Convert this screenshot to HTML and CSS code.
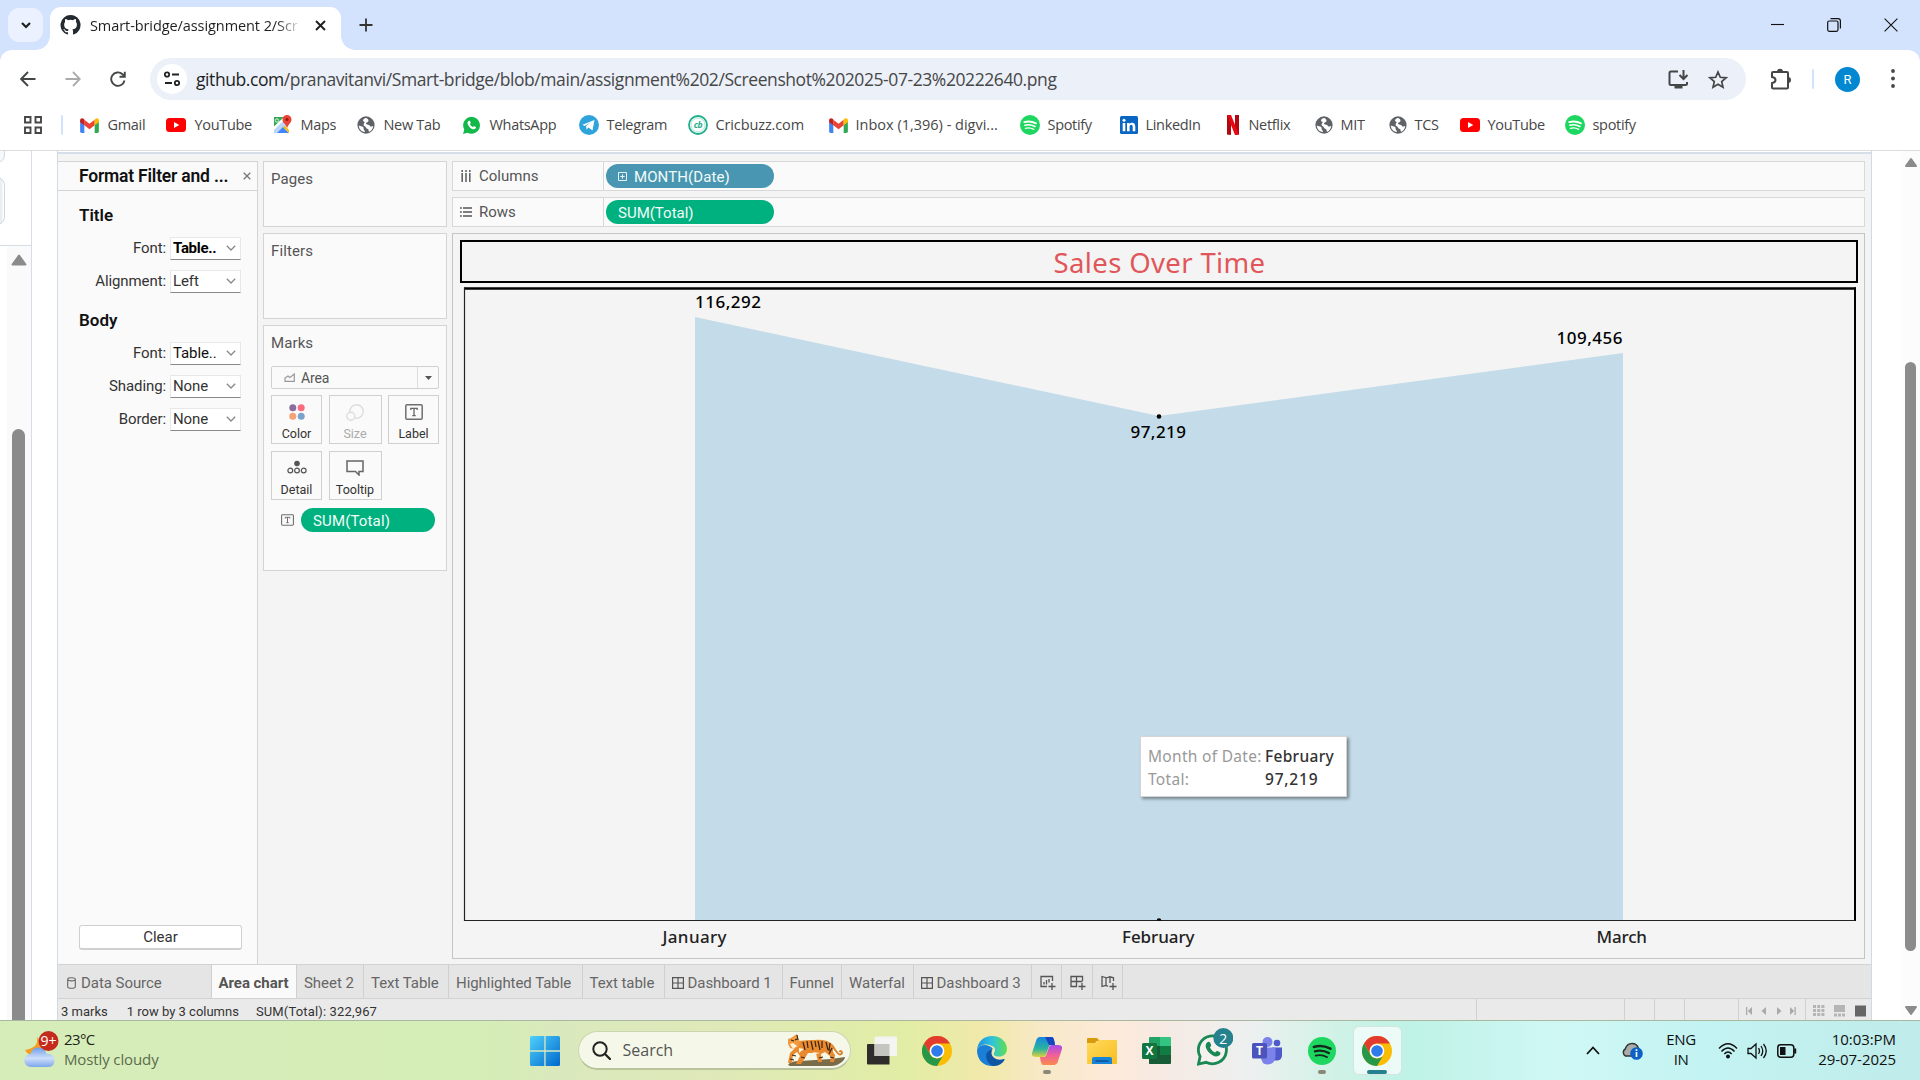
FILE: index.html
```html
<!DOCTYPE html>
<html lang="en">
<head>
<meta charset="utf-8">
<title>Smart-bridge/assignment 2/Screenshot 2025-07-23 222640.png</title>
<link rel="stylesheet" href="styles.css">
</head>
<body>
<svg class="defs" width="0" height="0">
  <defs>
    <symbol id="i-gmail" viewBox="0 0 20 16"><path fill="#4285f4" d="M0 3v11.500Q0 16 1.500 16H4.500V6z"/><path fill="#34a853" d="M20 3v11.500Q20 16 18.500 16H15.500V6z"/><path fill="#ea4335" d="M4.500 1.800 10 6l5.500-4.200v6L10 12 4.500 7.800z"/><path fill="#c5221f" d="M0 2.500C0 .3 2.300-.4 4.500 1.500V7.800L0 4.500z"/><path fill="#fbbc04" d="M20 2.500C20 .3 17.700-.4 15.500 1.500V7.800L20 4.500z"/></symbol>
    <symbol id="i-yt" viewBox="0 0 20 14"><rect width="20" height="14" rx="3.500" fill="#f00"/><path fill="#fff" d="M8 4l5.300 3L8 10z"/></symbol>
    <symbol id="i-globe" viewBox="0 0 20 20"><circle cx="10" cy="10" r="9.600" fill="#5f6368"/><path fill="#fff" d="M9.500 2.200c2 .2 3.500 1.600 3.300 3.400-.2 1.500-2.800 1.300-2.800 2.700 0 1.800 4.500.8 5.200 3.600L18 11c-.2 3-2 5.500-4.500 6.600-.8-.5-.6-1.500-.8-2.500-.3-1.300-2.600-.6-2.800-2.300-.2-1.600-2.400-1.200-2.600-3-.1-1.500 1.400-1.800 1.200-2.800-.2-1.200-1.700-.6-1.800-1.800 0-1.500 1.400-2.600 2.800-3z"/><path fill="#fff" d="M2 10.500c1.500.8 3.500.6 4.800 1.800 1.200 1.200-.2 2.300 1.400 3.600.6.500.6 1.400.3 2-3.700-.6-6.400-3.700-6.500-7.400z"/></symbol>
    <symbol id="i-spotify" viewBox="0 0 20 20"><circle cx="10" cy="10" r="10" fill="#1ed760"/><g fill="none" stroke-linecap="round" stroke="currentColor"><path stroke-width="1.900" d="M4.200 7.100q6-1.800 11.800 1.200"/><path stroke-width="1.600" d="M4.900 10.300q5.100-1.500 10 1.200"/><path stroke-width="1.300" d="M5.400 13.300q4.400-1.200 8.300 1.100"/></g></symbol>
    <symbol id="i-chrome" viewBox="0 0 30 30"><circle cx="15" cy="15" r="15" fill="#fbbc05"/><path fill="#e33b2e" d="M2 7.500A15 15 0 0 1 28 7.500H15a7.500 7.500 0 0 0-6.500 11.200z"/><path fill="#279847" d="M2 7.500 8.500 18.750A7.500 7.500 0 0 0 21.500 18.750L15 30A15 15 0 0 1 2 7.500z"/><circle cx="15" cy="15" r="7.300" fill="#fff"/><circle cx="15" cy="15" r="5.800" fill="#2f7bea"/></symbol>
    <symbol id="i-dash" viewBox="0 0 12 12"><path fill="none" stroke="#555" stroke-width="1.200" d="M.6.600h10.800v10.800H.6zM6 .6v10.800M.6 6h10.800"/></symbol>
    <symbol id="i-t" viewBox="0 0 18 16"><rect x=".8" y=".8" width="16.400" height="14.400" rx="1.200" fill="none" stroke="#6f6f6f" stroke-width="1.500"/><path fill="none" stroke="#666" stroke-width="1.300" d="M5.800 6V4.300h6.400V6M9 4.300v7.400M7.300 11.700h3.400"/></symbol>
    <symbol id="i-chev" viewBox="0 0 10 6"><path fill="none" stroke="#888" stroke-width="1.300" d="M.8.800 5 5 9.200.8"/></symbol>
  </defs>
</svg>

<header class="tabstrip">
  <div class="tab-search"><svg width="10" height="8" viewBox="0 0 10 8"><path d="M1 2l4 4 4-4" fill="none" stroke="#1f1f1f" stroke-width="2.200"/></svg></div>
  <div class="tab">
    <svg class="gh" width="21" height="20" viewBox="0 0 16 16"><path fill="#24292f" d="M8 0a8 8 0 0 0-2.530 15.590c.4.070.55-.17.550-.38v-1.490c-2.010.37-2.530-.49-2.690-.94-.09-.23-.48-.94-.82-1.130-.28-.15-.68-.52-.01-.53.63-.01 1.080.58 1.230.82.72 1.210 1.870.87 2.330.66.07-.52.280-.87.510-1.070-1.780-.2-3.640-.89-3.640-3.950 0-.87.310-1.590.820-2.150-.08-.2-.36-1.020.08-2.120 0 0 .67-.21 2.200.82a7.600 7.600 0 0 1 4 0c1.530-1.040 2.200-.82 2.200-.82.44 1.100.16 1.920.08 2.120.51.560.82 1.270.82 2.150 0 3.070-1.870 3.750-3.650 3.950.29.250.54.730.54 1.480v2.200c0 .21.150.46.550.38A8 8 0 0 0 8 0z"/></svg>
    <span class="tab-title">Smart-bridge/assignment 2/Scr</span>
    <svg width="11" height="11" viewBox="0 0 11 11"><path d="M1 1l9 9M10 1l-9 9" stroke="#1f1f1f" stroke-width="1.900"/></svg>
  </div>
  <svg class="newtab" width="14" height="14" viewBox="0 0 14 14"><path d="M7 .5v13M.5 7h13" stroke="#333" stroke-width="1.800"/></svg>
  <div class="winctl">
    <svg width="13" height="13" viewBox="0 0 13 13"><path d="M0 5.500h13" stroke="#111" stroke-width="1.100"/></svg>
    <svg width="14" height="14" viewBox="0 0 14 14"><path d="M3.500.6H11q2.400 0 2.400 2.400v7.500" fill="none" stroke="#111" stroke-width="1.200"/><rect x=".7" y="3" width="10.300" height="10.300" rx="1.500" fill="none" stroke="#111" stroke-width="1.200"/></svg>
    <svg width="14" height="14" viewBox="0 0 14 14"><path d="M.6.600l12.800 12.800M13.400.600L.6 13.400" stroke="#111" stroke-width="1.100"/></svg>
  </div>
</header>

<div class="chrome-body">
<nav class="toolbar">
  <div class="nav">
    <svg width="16" height="16" viewBox="0 0 16 16"><path d="M15.500 8H1.500M8 1 1.200 8 8 15" fill="none" stroke="#444746" stroke-width="1.900"/></svg>
    <svg width="16" height="16" viewBox="0 0 16 16"><path d="M.5 8h14M8 1l6.800 7L8 15" fill="none" stroke="#aaa" stroke-width="1.800"/></svg>
    <svg width="16" height="16" viewBox="0 0 16 16"><path d="M14.500 9.500a6.700 6.700 0 1 1-2-6.300L14.500 5M14.800.8v5H9.500" fill="none" stroke="#444746" stroke-width="1.900"/></svg>
  </div>
  <div class="omnibox">
    <div class="site"><svg width="16" height="16" viewBox="0 0 16 16"><g fill="none" stroke="#222" stroke-width="1.800"><circle cx="3" cy="3.500" r="2.200"/><path d="M8 3.500h7M1 12h7"/><circle cx="13" cy="12" r="2.200"/></g></svg></div>
    <span class="url"><b>github.com</b>/pranavitanvi/Smart-bridge/blob/main/assignment%202/Screenshot%202025-07-23%20222640.png</span>
    <svg class="inst" width="21" height="19" viewBox="0 0 21 19"><path d="M10 1.500H3Q1.500 1.500 1.500 3v10.500Q1.500 15 3 15h14.500q1.500 0 1.500-1.500V12" fill="none" stroke="#444746" stroke-width="2"/><path d="M6.500 15h8v3.500h-8z" fill="#444746"/><path d="M15.500 0v8M11.500 5l4 4 4-4" fill="none" stroke="#444746" stroke-width="2"/></svg>
    <svg width="20" height="19" viewBox="0 0 20 19"><path d="M10 2l2.300 5.300 5.700.5-4.300 3.800L15 17.200 10 14.200 5 17.200l1.300-5.600L2 7.800l5.700-.5z" fill="none" stroke="#444746" stroke-width="1.700"/></svg>
  </div>
  <svg class="ext" width="21" height="22" viewBox="0 0 21 22"><path d="M2 4h14q1 0 1 1v14.500q0 1-1 1H2q-1 0-1-1V15q3.500-.5 3.500-3T1 9V5q0-1 1-1z" fill="none" stroke="#444746" stroke-width="2"/><path d="M6 4a3 3.300 0 0 1 6 0zM17 9a3 3 0 0 1 0 6z" fill="#444746"/></svg>
  <i class="vsep"></i>
  <div class="avatar">R</div>
  <svg class="dots" width="4" height="20" viewBox="0 0 4 20"><g fill="#444746"><circle cx="2" cy="2" r="1.900"/><circle cx="2" cy="9.500" r="1.900"/><circle cx="2" cy="17" r="1.900"/></g></svg>
</nav>

<nav class="bookmarks">
  <svg width="18" height="18" viewBox="0 0 18 18"><path d="M1 1h5.500v5.500H1zM11.500 1H17v5.500h-5.500zM1 11.500h5.500V17H1zM11.500 11.500H17V17h-5.500z" fill="none" stroke="#444746" stroke-width="1.900"/></svg>
  <i class="vsep"></i>
  <a><svg width="19" height="15"><use href="#i-gmail"/></svg>Gmail</a>
  <a><svg width="20" height="14"><use href="#i-yt"/></svg>YouTube</a>
  <a><svg width="20" height="20" viewBox="0 0 20 20"><path fill="#34a853" d="M2 2h12L2 13z"/><path fill="#b9d7fb" d="M2 12 14 2h3v8L8 18H2z"/><path fill="#fff" d="M2 11.500 12 2h3L2 15z"/><path fill="#4285f4" d="M5 18l6-6 6 6z"/><path fill="#fbbc04" d="M13 11l4 4v3L11 12z"/><path fill="#ea4335" d="M15 0a4.500 4.500 0 0 1 4.500 4.500C19.500 8 16 9 15.200 13 14 9 10.500 8 10.500 4.500A4.500 4.500 0 0 1 15 0z"/><circle cx="15" cy="4.500" r="1.500" fill="#96190f"/><circle cx="5" cy="5.500" r="1.700" fill="none" stroke="#d9f2df"/></svg>Maps</a>
  <a><svg width="18" height="18"><use href="#i-globe"/></svg>New Tab</a>
  <a><svg width="17" height="17" viewBox="0 0 17 17"><path fill="#12b94a" d="M0 17l1.300-4.400A8.400 8.400 0 1 1 4.500 15.700z"/><path fill="#fff" d="M5.500 4c-2 1.700-.4 4.300 1 5.900 1.800 2 4.300 3.300 6 1.700.8-.8.500-1.500-.2-1.900-1.700-.8-1.500-.5-2.300.4C8.600 9.500 7.400 8.400 6.900 7c.9-.8 1-1 .5-2.100C7 3.900 6.600 3.400 5.500 4z"/></svg>WhatsApp</a>
  <a><svg width="20" height="20" viewBox="0 0 20 20"><circle cx="10" cy="10" r="10" fill="#2fa3dc"/><path fill="#fff" d="M3.500 9.800 15.500 5l-2 10.500-4-3-2 2-.4-3.500 5-4-6.500 4z"/></svg>Telegram</a>
  <a class="cric"><svg class="cb" width="20" height="20" viewBox="0 0 20 20"><circle cx="10" cy="10" r="9" fill="#fff" stroke="#1fae8c" stroke-width="1.800"/><circle cx="10" cy="10" r="7" fill="none" stroke="#9cdccb" stroke-width=".8"/><text x="10" y="13.300" text-anchor="middle">cb</text></svg>Cricbuzz.com</a>
  <a class="inbox"><svg width="19" height="15"><use href="#i-gmail"/></svg>Inbox (1,396) - digvi...</a>
  <a><svg width="20" height="20"><use href="#i-spotify"/></svg>Spotify</a>
  <a><svg class="li" width="18" height="18" viewBox="0 0 18 18"><rect width="18" height="18" rx="1.500" fill="#0a66c2"/><path fill="#fff" d="M2.700 7h2.600v8.300H2.700zM7 7h2.500v1.200c1.300-2.200 5.800-2 5.800 2.300v4.800h-2.600v-4.200c0-3.300-3.100-2.700-3.100 0v4.200H7z"/><circle cx="4" cy="4.200" r="1.500" fill="#fff"/></svg>LinkedIn</a>
  <a><svg width="12" height="20" viewBox="0 0 12 20"><path fill="#b20710" d="M0 0h4v20l-4-.5zM8 0h4v19.500L8 20z"/><path fill="#e50914" d="M0 0h4l8 19.500L8 20z"/></svg>Netflix</a>
  <a><svg width="18" height="18"><use href="#i-globe"/></svg>MIT</a>
  <a><svg width="18" height="18"><use href="#i-globe"/></svg>TCS</a>
  <a><svg width="20" height="14"><use href="#i-yt"/></svg>YouTube</a>
  <a><svg width="20" height="20"><use href="#i-spotify"/></svg>spotify</a>
</nav>
</div>

<main class="page">
  <aside class="gh-side">
    <div class="gh-top"><i class="stub s1"></i><i class="stub s2"></i></div>
    <div class="gh-scroll"><svg width="16" height="12" viewBox="0 0 16 12"><path d="M8 1.500 14.500 10.500H1.500z" fill="#8b8b8b" stroke="#8b8b8b" stroke-width="2" stroke-linejoin="round"/></svg><i class="thumb"></i></div>
  </aside>

  <section class="shot">
    <div class="work">
      <aside class="format">
        <div class="fhead"><h2>Format Filter and ...</h2><svg width="8" height="8" viewBox="0 0 8 8"><path d="M.7.700l6.600 6.600M7.300.700L.7 7.300" stroke="#777" stroke-width="1.300"/></svg></div>
        <h3>Title</h3>
        <label><span>Font:</span><span class="sel strong">Table..<svg width="10" height="6"><use href="#i-chev"/></svg></span></label>
        <label><span>Alignment:</span><span class="sel">Left<svg width="10" height="6"><use href="#i-chev"/></svg></span></label>
        <h3 class="second">Body</h3>
        <label><span>Font:</span><span class="sel dark">Table..<svg width="10" height="6"><use href="#i-chev"/></svg></span></label>
        <label><span>Shading:</span><span class="sel">None<svg width="10" height="6"><use href="#i-chev"/></svg></span></label>
        <label><span>Border:</span><span class="sel">None<svg width="10" height="6"><use href="#i-chev"/></svg></span></label>
        <button class="clear">Clear</button>
      </aside>

      <div class="cards">
        <div class="card pages">Pages</div>
        <div class="card filters">Filters</div>
        <div class="card marks">
          <span>Marks</span>
          <div class="mtype"><svg width="11" height="9" viewBox="0 0 11 9"><path d="M1 8.300V5l3-2 2 1.500L10.300 1v7.300z" fill="none" stroke="#999" stroke-width="1.200"/></svg><span>Area</span><i><svg width="7" height="4" viewBox="0 0 7 4"><path d="M0 0h7L3.500 4z" fill="#555"/></svg></i></div>
          <div class="mgrid">
            <div><svg width="16" height="16" viewBox="0 0 16 16"><circle cx="3.800" cy="3.800" r="3.500" fill="#8a6f9e"/><circle cx="12.200" cy="3.800" r="3.500" fill="#fa6b7f"/><circle cx="3.800" cy="12.200" r="3.500" fill="#f4a273"/><circle cx="12.200" cy="12.200" r="3.500" fill="#7ba3cc"/></svg>Color</div>
            <div class="off"><svg width="18" height="17" viewBox="0 0 18 17"><g fill="#fafafa" stroke="#ddd" stroke-width="1.400"><circle cx="10.500" cy="7.500" r="6.800"/><circle cx="4.800" cy="12.200" r="4"/></g></svg>Size</div>
            <div><svg width="18" height="16"><use href="#i-t"/></svg>Label</div>
            <div><svg width="20" height="14" viewBox="0 0 20 14"><circle cx="10" cy="3.500" r="2.800" fill="#555"/><g fill="none" stroke="#555" stroke-width="1.200"><circle cx="3.300" cy="10.500" r="2.400"/><circle cx="10" cy="10.500" r="2.400"/><circle cx="16.700" cy="10.500" r="2.400"/></g></svg>Detail</div>
            <div><svg width="18" height="16" viewBox="0 0 18 16"><path d="M1 1h16v10.500h-4v3.500l-3.500-3.500H1z" fill="none" stroke="#666" stroke-width="1.500"/></svg>Tooltip</div>
          </div>
          <div class="mpill"><svg width="13" height="12"><use href="#i-t"/></svg><span class="pill green">SUM(Total)</span></div>
        </div>
      </div>

      <div class="viz">
        <div class="shelf"><span class="sname"><svg width="10" height="12" viewBox="0 0 10 12"><path d="M1.200 3v9M5 3v9M8.800 3v9M1.200 0v2M5 0v2M8.800 0v2" stroke="#666" stroke-width="1.600"/></svg>Columns</span><span class="pill blue"><svg width="9" height="9" viewBox="0 0 9 9"><path d="M.5.500h8v8h-8zM4.500 2.300v4.400M2.300 4.500h4.400" fill="none" stroke="#e6f1f6"/></svg>MONTH(Date)</span></div>
        <div class="shelf"><span class="sname rows"><svg width="12" height="10" viewBox="0 0 12 10"><path d="M3 1h9M3 5h9M3 9h9M0 1h1.800M0 5h1.800M0 9h1.800" stroke="#555" stroke-width="1.600"/></svg>Rows</span><span class="pill green">SUM(Total)</span></div>
        <div class="canvas">
          <h1>Sales Over Time</h1>
          <div class="plot">
            <svg class="chart" width="1393" height="670" viewBox="464 287 1393 670">
              <path d="M695 317 1159 416 1623 353V920.500H695z" fill="#c4dce9"/>
              <path d="M464 288.500H1856" stroke="#000" stroke-width="2.400"/>
              <path d="M1855 287.500V921" stroke="#000" stroke-width="2"/>
              <path d="M464.500 287.500V920.500H1855" fill="none" stroke="#222" stroke-width="1.200"/>
              <circle cx="1159" cy="416.500" r="2.300"/><path d="M1156.700 920.500a2.300 2.300 0 0 1 4.600 0z"/>
              <g class="val"><text x="695" y="308" textLength="66">116,292</text><text x="1130.500" y="438" textLength="55.500">97,219</text><text x="1556.500" y="344" textLength="66">109,456</text></g>
              <g class="mon"><text x="662.500" y="943" textLength="64">January</text><text x="1122" y="943" textLength="72.500">February</text><text x="1596.500" y="943" textLength="50.500">March</text></g>
            </svg>
            <dl class="tip"><dt>Month of Date:</dt><dd>February</dd><dt>Total:</dt><dd class="num">97,219</dd></dl>
          </div>
        </div>
      </div>
    </div>

    <div class="sheets">
      <span class="ds"><svg width="9" height="12" viewBox="0 0 9 12"><path d="M.7 2.300q0-1.600 3.800-1.600t3.800 1.600v7.400q0 1.600-3.800 1.600T.7 9.700zq0 1.600 3.800 1.600t3.800-1.600" fill="none" stroke="#666" stroke-width="1.100"/></svg>Data Source</span>
      <span class="active">Area chart</span><span>Sheet 2</span><span>Text Table</span><span>Highlighted Table</span><span>Text table</span>
      <span><svg width="12" height="12"><use href="#i-dash"/></svg>Dashboard 1</span><span>Funnel</span><span>Waterfal</span>
      <span><svg width="12" height="12"><use href="#i-dash"/></svg>Dashboard 3</span>
      <span class="add"><svg width="16" height="16" viewBox="0 0 16 16"><path d="M7 11.500H1V1.500h11.500V6M4 9.500V7M6.500 9.500V5M9 7.500V4M12 8v7M8.500 11.500h7" fill="none" stroke="#555" stroke-width="1.300"/></svg></span>
      <span class="add"><svg width="16" height="16" viewBox="0 0 16 16"><path d="M7 11.500H1V1.500h11.500V6M6.500 1.500v10M1 6.500h11.500M12 8v7M8.500 11.500h7" fill="none" stroke="#555" stroke-width="1.300"/></svg></span>
      <span class="add"><svg width="16" height="16" viewBox="0 0 16 16"><path d="M7 11.500 5 10.300 1 11.500V1.500l4 1.200V10M5 3l4-1.200 3.500 1V6M9 2v6M12 8v7M8.500 11.500h7" fill="none" stroke="#555" stroke-width="1.300"/></svg></span>
    </div>
    <div class="status">
      <span>3 marks</span><span>1 row by 3 columns</span><span>SUM(Total): 322,967</span>
      <div class="cells"><i></i><i></i><i></i><i></i>
        <i class="pager"><svg width="52" height="8" viewBox="0 0 52 8"><g fill="#aaa"><path d="M1 0h1.300v8H1zM7 0v8L2.800 4zM21 0v8l-4.500-4zM32 0v8l4.500-4zM45 0v8l4.200-4zM49.500 0h1.300v8h-1.300z"/></g></svg></i>
        <i class="views"><svg width="54" height="12" viewBox="0 0 54 12"><path d="M0 1.500h11.500M0 5.500h11.500M0 9.500h11.500" stroke="#b5b5b5" stroke-width="3" stroke-dasharray="3 1.200"/><path d="M21 0h11v7H21z" fill="#b5b5b5"/><path d="M21 10h11" stroke="#b5b5b5" stroke-width="3" stroke-dasharray="3 1"/><path d="M42 .500h11v11H42z" fill="#666"/></svg></i>
      </div>
    </div>
  </section>

  <div class="vscroll"><svg width="14" height="11" viewBox="0 0 14 11"><path d="M7 2l5 7H2z" fill="#8b8b8b" stroke="#8b8b8b" stroke-width="2" stroke-linejoin="round"/></svg><i class="thumb"></i><svg width="14" height="11" viewBox="0 0 14 11"><path d="M7 9l5-7H2z" fill="#8b8b8b" stroke="#8b8b8b" stroke-width="2" stroke-linejoin="round"/></svg></div>
</main>

<footer class="taskbar">
  <div class="weather">
    <svg width="36" height="40" viewBox="0 0 36 40"><defs><linearGradient id="cl" x2="0" y2="1"><stop offset="0" stop-color="#6f9ce8"/><stop offset=".55" stop-color="#cfe0fb"/><stop offset="1" stop-color="#7ea6ea"/></linearGradient></defs><path d="M13 9c1 8-2 11-12 13 4 8 18 8 22-2z" fill="#f59e22"/><path d="M7 39a6.500 6.500 0 0 1-.5-13Q8 19 15 19.500q6 .5 7.500 6.200Q31 26 30.500 33q-.5 6-6.500 6z" fill="url(#cl)"/><circle cx="24.500" cy="13" r="10" fill="#c42b1c"/><text x="24.500" y="18" text-anchor="middle" class="wb">9+</text></svg>
    <p><b>23°C</b><span>Mostly cloudy</span></p>
  </div>

  <div class="apps">
    <svg class="win" width="30" height="30" viewBox="0 0 30 30"><defs><linearGradient id="wg" x2="1" y2="1"><stop offset="0" stop-color="#4fd0fb"/><stop offset="1" stop-color="#0069cc"/></linearGradient></defs><path fill="url(#wg)" d="M0 1.500Q0 0 1.500 0H14.300V14.300H0zM15.600 0h12.900Q30 0 30 1.500V14.300H15.600zM0 15.700h14.300V30H1.500Q0 30 0 28.500zM15.600 15.700H30v12.800Q30 30 28.500 30H15.600z"/></svg>
    <div class="search">
      <svg width="19" height="19" viewBox="0 0 19 19"><circle cx="8" cy="8" r="6.700" fill="none" stroke="#222" stroke-width="2"/><path d="M13 13l5 5" stroke="#222" stroke-width="2.300" stroke-linecap="round"/></svg>
      <span>Search</span>
      <svg width="60" height="34" viewBox="0 0 60 34"><path d="M2 32q2-4 12-4l31-2 14-2q0 4-8 8-3 1-6 1H4z" fill="#7a6b49"/><path d="M46 12q6 10 8 9.500 3-1 1.500-3-1.500-1-2 .5" fill="none" stroke="#d9822b" stroke-width="2"/><path d="M13 8q7-1 15-1 14-1 19 5l0 7 2 3-1 7h-4l1-5-6-5-4 2 1 8h-4l-2-9-8 0-3 5-4 6h-5l4-8-3-4-4 3-1 8H2l2-10 5-5z" fill="#ea8a2e"/><path d="M2 6 5 5l6-4 1 4 2 4-2 5-4 2-4-1-2-4z" fill="#f29a3e"/><path d="M4 11l3-1 4 3-4 3zM13 15l5 1-5 4zM26 19l8 1-4 1z" fill="#fff3dc"/><path d="M17 9l2 8M21 8l1 7M25 8l2 9M29 8l1 6M32 8l2 9M36 8v7M40 9l2 8M44 10l-1 8M46 15l-3 6M6 22l4 1M4 26l4 1M33 25l4-1M44 24l4 1M11 2l1 5M5 7l3 1M9 7l2-1M15 24l4 1" stroke="#3a2413" stroke-width="1.200" fill="none"/></svg>
    </div>
    <svg class="tv" width="30" height="30" viewBox="0 0 30 30"><path d="M0 9q0-1 1-1h21.500v20.500H1q-1 0-1-1z" fill="#2e2d2b"/><path d="M7.500 1.500q0-1 1-1H29q1 0 1 1v17.500q0 1-1 1H7.500z" fill="#f4f4f2"/><path d="M7.500 8h15v12h-15z" fill="#c4c5bf"/></svg>
    <svg width="30" height="30"><use href="#i-chrome"/></svg>
    <svg width="30" height="30" viewBox="0 0 30 30"><defs><linearGradient id="e1" x2="1"><stop offset="0" stop-color="#1e8fe0"/><stop offset=".5" stop-color="#2fc3dc"/><stop offset="1" stop-color="#5fe04e"/></linearGradient></defs><path d="M0 14C1 5 7 0 15 0c9 0 15 6 15 13 0 5-4 7.500-8 7.500-4 0-6-1.500-5-3.500 2-3 1-6-2-7C9 7 2 9 0 14z" fill="url(#e1)"/><path d="M0 14c2-5 8-6 12-4 3 1 4 3 3.500 3C9 13 8 23 15 28.500l2 1.400C8 31 0 25 0 14z" fill="#1a7fd6"/><path d="M15.500 13C7 14 7 26 16 30c5 .3 9-2 11.500-6 .3-.6 0-1.200-.8-1-6 2-12-1-12.200-6 0-1.600.4-2.800 1-4z" fill="#0f55a4"/></svg>
    <div class="app run"><svg width="30" height="28" viewBox="0 0 30 28"><defs><linearGradient id="c1" x2="0" y2="1"><stop offset="0" stop-color="#1787e0"/><stop offset=".6" stop-color="#2bb59b"/><stop offset="1" stop-color="#e3d13b"/></linearGradient><linearGradient id="c2" x2="0" y2="1"><stop offset="0" stop-color="#a44bea"/><stop offset=".5" stop-color="#f0609a"/><stop offset="1" stop-color="#fa8a4c"/></linearGradient></defs><path d="M8 0h12q2 0 3 8h-4q-2 0-3 4l-2 6q-1 2-3 2H4q-5 0-4-4L4 4q1-4 4-4z" fill="url(#c1)"/><path d="M13 0h7q2 0 3 8h-6z" fill="#1646bf"/><path d="M22 28H11q-2 0-3-8h4q2 0 3-4l2-6q1-2 3-2h6q5 0 4 4l-4 12q-1 4-4 4z" fill="url(#c2)"/></svg></div>
    <svg width="30" height="28" viewBox="0 0 30 28"><defs><linearGradient id="fg" x2="1" y2="1"><stop offset="0" stop-color="#ffda5c"/><stop offset="1" stop-color="#f8bd20"/></linearGradient></defs><path d="M0 2q0-1 1-1h9l3 3h-3l-3 3H0z" fill="#d99a0c"/><path d="M0 6h9l3-3h17q1 0 1 1v22q0 1-1 1H1q-1 0-1-1z" fill="url(#fg)"/><path d="M5 27v-5q0-2 2-2h16q2 0 2 2v5z" fill="#1784d8"/><path d="M8.500 24h13" stroke="#0c4f94" stroke-width="1.500"/></svg>
    <svg class="xl" width="30" height="28" viewBox="0 0 30 28"><path d="M7 1q0-1 1-1h11v9H7z" fill="#21a366"/><path d="M18 0h10q1 0 1 1v8H18z" fill="#33c481"/><path d="M7 9h11v18H8q-1 0-1-1z" fill="#107c41"/><path d="M18 9h11v9H18z" fill="#107c41"/><path d="M7 18h22v8q0 1-1 1H8q-1 0-1-1z" fill="#185c37"/><path d="M7 9h11v9H7z" fill="#185c37"/><rect y="6" width="15" height="16" rx="1.500" fill="#117540"/><text x="7.500" y="18" text-anchor="middle">X</text></svg>
    <div class="app wa"><svg width="36" height="38" viewBox="0 0 36 38"><path d="M1.500 36l1.600-7.500A14 14 0 1 1 9 34.300z" fill="#f4f1ee" stroke="#1b8755" stroke-width="2.800"/><path d="M10 14.500c-3 3-.4 7.500 2 10 3.500 3.700 8 5.500 11 2.300 1-1.200.5-2-.6-2.700-2.500-1.500-2.600-1.300-4.200.5-2.300-1-4.300-2.900-5.300-5.300 1.500-1.300 1.500-1.600.8-3.600-.8-2-1.700-2.700-3.700-1.200z" fill="#1b8755"/><circle cx="26.300" cy="10" r="10" fill="#26818f"/><text x="26.300" y="15.500" text-anchor="middle" class="wb">2</text></svg></div>
    <svg class="teams" width="30" height="28" viewBox="0 0 30 28"><circle cx="15.500" cy="5" r="5" fill="#7b83eb"/><circle cx="25" cy="6" r="3.300" fill="#5059c9"/><path d="M20 10.500h10v8.500q-1 5-6 4.500h-4z" fill="#5059c9"/><path d="M9 10.500h14.500V20q-1 7-7.500 7.500T9 20z" fill="#7b83eb"/><rect y="6" width="15" height="15.500" rx="1.500" fill="#4b53bc"/><text x="7.500" y="18" text-anchor="middle">T</text></svg>
    <div class="app run sp"><svg width="28" height="28"><use href="#i-spotify"/></svg></div>
    <div class="app cur"><svg width="30" height="30"><use href="#i-chrome"/></svg></div>
  </div>

  <div class="tray">
    <svg width="14" height="9" viewBox="0 0 14 9"><path d="M1 8l6-6.500L13 8" fill="none" stroke="#111" stroke-width="1.800"/></svg>
    <svg width="21" height="18" viewBox="0 0 21 18"><path d="M3.500 14a4 4 0 0 1-.3-7Q5 1.500 10 1.500q5 0 6.500 5l1 7.500z" fill="#a8adab" stroke="#333" stroke-width="1.500"/><circle cx="14.500" cy="11.500" r="6.300" fill="#0b62c4"/><path d="M14.500 10v5M14.500 7.300v1.600" stroke="#fff" stroke-width="1.700"/></svg>
    <p class="lang">ENG<br>IN</p>
    <svg width="20" height="17" viewBox="0 0 20 17"><g fill="none" stroke="#111" stroke-width="1.400"><path d="M1 6.500q9-9.500 18 0M3.500 9.500q6.500-7 13 0M6.300 12q3.700-4 7.400 0"/></g><circle cx="10" cy="14.500" r="2" fill="#111"/></svg>
    <svg width="21" height="18" viewBox="0 0 21 18"><path d="M1 6.500h3L9 2v14L4 11.500H1z" fill="none" stroke="#111" stroke-width="1.300"/><path d="M11.500 6.200q2 2.800 0 5.600M14 4q3.500 5 0 10M16.500 2q5.500 7 0 14" fill="none" stroke="#111" stroke-width="1.300"/></svg>
    <svg width="20" height="14" viewBox="0 0 20 14"><rect x=".8" y=".8" width="16" height="12.400" rx="3" fill="none" stroke="#111" stroke-width="1.500"/><path d="M3 3h5.500v8H3z" fill="#111"/><path d="M18.200 4.500v5" stroke="#111" stroke-width="2"/></svg>
    <p class="clock">10:03:PM<br>29-07-2025</p>
  </div>
</footer>
</body>
</html>
```
FILE: styles.css
```css
* { box-sizing: border-box; }
body { margin: 0; width: 1920px; height: 1080px; overflow: hidden; display: flex; flex-direction: column; background: #d3e2fd; font-family: "Open Sans", "Noto Sans", sans-serif; color: #1f1f1f; }
svg { flex: none; display: block; }
p, h1, h2, h3, dl, dd { margin: 0; }
.defs { position: absolute; }
i { display: block; flex: none; }
b { font-weight: 400; }

/* browser tab strip */
.tabstrip { height: 50px; flex: none; display: flex; align-items: center; padding-left: 8px; }
.tab-search { width: 35px; height: 34px; border-radius: 11px; background: #ebf1fe; display: grid; place-items: center; }
.tab { align-self: flex-end; width: 291px; height: 43px; margin-left: 7px; padding: 0 15px 7px 10px; border-radius: 11px 11px 0 0; background: #fff; display: flex; align-items: center; position: relative; }
.tab::before, .tab::after { content: ""; position: absolute; bottom: 0; width: 14px; height: 14px; }
.tab::before { left: -14px; background: radial-gradient(circle at 0 0, transparent 13.500px, #fff 14px); }
.tab::after { right: -14px; background: radial-gradient(circle at 100% 0, transparent 13.500px, #fff 14px); }
.tab-title { width: 212px; margin: 0 13px 0 9px; white-space: nowrap; font-size: 14.500px; letter-spacing: -.08px; -webkit-mask-image: linear-gradient(90deg, #000 186px, transparent 212px); mask-image: linear-gradient(90deg, #000 186px, transparent 212px); }
.newtab { margin-left: 18px; }
.winctl { margin-left: auto; padding-right: 22px; display: flex; align-items: center; gap: 43px; }

.chrome-body { flex: none; background: #fff; border-radius: 12px 12px 0 0; border-bottom: 1px solid #dcdcdc; height: 101px; }
.toolbar { height: 58px; display: flex; align-items: center; padding-left: 20px; }
.nav { display: flex; gap: 29px; width: 130px; }
.omnibox { width: 1596px; height: 42px; border-radius: 21px; background: #ebf0f9; display: flex; align-items: center; padding: 0 18px 0 7px; }
.site { width: 30px; height: 30px; border-radius: 50%; background: #fff; display: grid; place-items: center; }
.url { margin-left: 9px; flex: 1; font-size: 17.500px; letter-spacing: -.42px; color: #474747; white-space: nowrap; }
.url b { color: #1f1f1f; }
.inst { margin-right: 19px; }
.ext { margin-left: 25px; }
.vsep { width: 2px; height: 20px; background: #d3e3fd; border-radius: 1px; }
.toolbar .vsep { margin: 0 21px 0 20px; }
.avatar { width: 25px; height: 25px; border-radius: 50%; background: #0288d1; color: #fff; font: 13px Roboto, sans-serif; display: grid; place-items: center; }
.dots { margin-left: 31px; }

.bookmarks { height: 34px; padding-left: 24px; display: grid; align-items: center; grid-template-columns: 37px 19px 86px 106px 85px 106px 116px 109px 141px 191px 100px 107px 88px 74px 71px 105px 90px; color: #474747; font-size: 14.500px; line-height: 20px; letter-spacing: -.32px; }
.bookmarks a { display: flex; align-items: center; gap: 8.500px; white-space: nowrap; }
.bookmarks a:nth-of-type(n+5) { gap: 7.500px; }
.bookmarks a:nth-of-type(5), .bookmarks a:nth-of-type(11) { gap: 9.500px; }
.bookmarks .cric { gap: 11px; letter-spacing: -.12px; }
.bookmarks .inbox { gap: 7px; letter-spacing: 0; }
.bookmarks svg { color: #fff; }
.cb text { font: italic 700 8.500px "Open Sans", sans-serif; fill: #1fae8c; letter-spacing: -.3px; }

/* page */
.page { flex: none; height: 869px; background: #fff; display: flex; overflow: hidden; }
.gh-side { width: 32px; border-right: 1px solid #d5dde6; margin-right: 25px; display: flex; flex-direction: column; }
.gh-top { height: 95px; border-bottom: 1px solid #d5dde6; overflow: hidden; display: flex; flex-direction: column; gap: 14px; }
.stub { width: 18px; margin-left: -13px; border: 1px solid #d0d7de; background: #f6f8fa; border-radius: 8px; }
.s1 { height: 24px; margin-top: -12px; }
.s2 { height: 48px; background: linear-gradient(90deg, #eaeef2 14px, #fff 15px); }
.gh-scroll { flex: 1; margin-left: 7px; background: #fafafa; display: flex; flex-direction: column; align-items: center; padding: 8px 1px 0 0; }
.thumb { background: #8b8b8b; border-radius: 7px; }
.gh-scroll .thumb { width: 13px; margin-top: 163px; flex: 1; border-radius: 7px 7px 0 0; }

.shot { width: 1815px; border: solid #cfdae5; border-width: 0 1px; display: flex; flex-direction: column; font-family: Roboto, "Open Sans", sans-serif; color: #555; font-size: 15px; }
.work { height: 814px; background: #f4f4f4; border-top: 2px solid #d5dfe9; margin-top: 1px; padding: 7px 6px 0 0; display: flex; }
.format { width: 200px; background: #fafafa; border: 1px solid #d4d4d4; border-width: 1px 1px 0 0; display: flex; flex-direction: column; color: #333; }
.fhead { height: 29px; padding: 0 6px 0 21px; display: flex; align-items: center; justify-content: space-between; border-bottom: 1px solid #d4d4d4; }
.fhead h2 { font-size: 17.500px; font-weight: 600; color: #111; letter-spacing: -.2px; }
h3 { font-size: 17px; font-weight: 600; color: #111; padding-left: 21px; line-height: 24px; margin: 12px 0 9px; }
h3.second { margin: 6px 0 9px; }
label { display: flex; height: 24px; margin-bottom: 9px; padding-right: 16px; justify-content: flex-end; align-items: center; gap: 4px; letter-spacing: -.1px; }
.sel { width: 71px; height: 23px; background: #fff; border: 1px solid #e8e8e8; border-bottom-color: #888; display: flex; align-items: center; justify-content: space-between; padding: 0 4px 0 2px; }
.sel.dark { color: #111; }
.strong { font-weight: 700; color: #000; letter-spacing: -.3px; }
.clear { margin: auto 15px 14px 21px; height: 25px; background: #fff; border: 1px solid #d0d0d0; border-bottom-width: 2px; border-radius: 3px; font: 15px Roboto, sans-serif; color: #333; padding: 0; }

.cards { width: 184px; margin: 0 5px 0 5px; display: flex; flex-direction: column; gap: 6px; }
.card { border: 1px solid #d4d4d4; background: #fafafa; padding: 8px 7px; letter-spacing: .1px; }
.pages { height: 66px; }
.filters { height: 86px; }
.marks { height: 246px; display: flex; flex-direction: column; }
.mtype { height: 23px; margin: 14px 0 0; border: 1px solid #d0d0d0; border-radius: 2px; display: flex; align-items: center; padding-left: 12px; font-size: 14px; letter-spacing: -.1px; }
.mtype span { margin-left: 6px; flex: 1; }
.mtype i { width: 21px; height: 21px; border-left: 1px solid #ddd; display: grid; place-items: center; }
.mgrid { margin: 6px 0 0; display: grid; grid-template-columns: 51px 53px 51px; gap: 7px; column-gap: 6.500px; font-size: 12.500px; color: #333; }
.mgrid div { height: 49px; border: 1px solid #d0d0d0; display: flex; flex-direction: column; align-items: center; justify-content: space-between; padding: 8px 0 2px; letter-spacing: 0; }
.mgrid .off { color: #aaa; }
.mpill { margin: 8px 4px 0 10px; display: flex; align-items: center; justify-content: space-between; }
.pill { height: 24px; border-radius: 12px; color: #f3fbf8; display: flex; align-items: center; padding: 1px 12px 0; font-size: 15px; }
.mpill .pill { width: 134px; letter-spacing: .15px; }
.green { background: #00b180; }
.blue { background: #4996b2; }

.viz { flex: 1; display: flex; flex-direction: column; }
.shelf { height: 30px; margin-bottom: 6px; background: #fafafa; border: 1px solid #d8d8d8; display: flex; align-items: center; font-size: 15px; }
.sname { width: 151px; height: 100%; border-right: 1px solid #d8d8d8; margin-right: 2px; padding-left: 8px; display: flex; align-items: center; gap: 8px; }
.rows { padding-left: 7px; gap: 7px; }
.shelf .pill { width: 168px; gap: 7px; }
.shelf .blue { letter-spacing: .1px; }
.canvas { height: 726px; border: 1px solid #c4c4c4; padding: 6px 6px 6px 7px; }
h1 { height: 43px; border: 2px solid #000; text-align: center; font: 400 27.500px/42px "Noto Sans", sans-serif; color: #e15759; letter-spacing: .35px; padding-left: 1px; }
.plot { position: relative; margin: 4px 0 0 4px; height: 662px; }
.chart { overflow: visible; font-family: "Noto Sans", sans-serif; fill: #000; }
.val { font-size: 17px; font-weight: 500; }
.mon { font-size: 17px; font-weight: 500; fill: #222; }
.tip { position: absolute; left: 676px; top: 449px; width: 207px; height: 61px; background: #fff; border: 1px solid #d4d4d4; box-shadow: 2px 2px 3px #0006; padding: 8px 7px; display: grid; grid-template-columns: 117px 1fr; font: 15.500px/22.500px "Noto Sans", sans-serif; color: #999; letter-spacing: .3px; white-space: nowrap; }
.tip dd { color: #333; font-weight: 500; }
.tip .num { letter-spacing: .8px; }

.sheets { height: 35px; background: #e5e5e5; border: solid #d2d2d2; border-width: 1px 0; display: grid; grid-template-columns: 153.500px 85.500px 67px 85px 133.500px 82px 118px 59.500px 71.500px 118px 30.500px 30.500px 30px; color: #666; font-size: 15px; letter-spacing: -.05px; }
.sheets span { border-right: 1px solid #cfcfcf; display: flex; align-items: center; padding: 2px 0 0 7px; gap: 4px; white-space: nowrap; }
.sheets .ds { padding-left: 9px; gap: 5px; }
.sheets .add { padding-left: 8px; }
.sheets .active { background: #fafafa; font-weight: 700; color: #555; }
.status { height: 21px; background: #eaeaea; display: flex; align-items: center; gap: 20px; padding-left: 3px; font-size: 13px; color: #333; }
.status span { margin-top: 3px; }
.status span:nth-child(n+2) { margin-left: -1px; }
.status span:nth-child(3) { margin-left: -3px; letter-spacing: .15px; }
.cells { margin-left: auto; height: 21px; display: grid; grid-template-columns: 148px 30px 30px 54px 67.500px 66px; }
.cells i { border-left: 1px solid #d0d0d0; }
.pager { padding: 8px 0 0 6px; }
.views { padding: 6px 0 0 7px; }

.vscroll { margin-left: auto; width: 18px; background: #fcfcfc; display: flex; flex-direction: column; align-items: center; padding: 6px 1px 4px 0; }
.vscroll .thumb { width: 11px; height: 589px; margin: 194px 0 auto; }

/* taskbar */
.taskbar { flex: none; height: 60px; border-top: 1px solid #a9b9a0; display: flex; align-items: center; background: linear-gradient(90deg, #d6edba 0, #d5edb6 480px, #dae9bd 560px, #dfe9b8 720px, #e1eda5 900px, #f1e9aa 985px, #f8e9ca 1050px, #fdead9 1110px, #f5eae4 1170px, #edf0f0 1250px, #cff2e6 1340px, #bff2e6 1410px, #cff8f5 1560px, #c3f3f2 1700px, #bfeceb 1920px); }
.weather { width: 529.500px; padding-left: 24px; display: flex; align-items: center; gap: 4px; }
.weather p { font-size: 15px; line-height: 20px; letter-spacing: -.12px; color: #5c6b4d; margin-top: -4px; }
.weather svg { margin-top: -6px; }
.weather b { display: block; color: #1b1f16; letter-spacing: -.6px; }
.wb { font: 14px "Open Sans", sans-serif; fill: #fff; }
.apps { display: flex; align-items: center; gap: 25px; }
.win { margin-right: -7px; }
.search { width: 273px; height: 39px; border-radius: 20px; background: #f5f8e8; border: 1px solid #cdd5b0; border-bottom: 2px solid #b9c49c; display: flex; align-items: center; padding: 0 4px 0 13px; margin-right: -9px; }
.search span { flex: 1; margin-left: 12px; font-size: 16px; color: #555; }
.app { width: 30px; height: 59px; display: grid; place-items: center; position: relative; }
.app svg { position: relative; }
.sp { color: #14281b; }
.wa { place-items: center start; }
.wa svg { margin-top: -7px; }
.run::after, .cur::after { content: ""; position: absolute; bottom: 6px; left: 11px; width: 8px; height: 4px; border-radius: 2px; background: #8a8877; }
.cur { z-index: 0; }
.cur::before { content: ""; position: absolute; inset: 5px -10px 5px -9px; border-radius: 6px; background: #ecfbf8; border: 1px solid #d2e6df; }
.cur::after { left: 5px; width: 20px; background: #26818f; }
.xl text { font: 700 12px "Open Sans", sans-serif; fill: #fff; }
.teams text { font: 700 12px "Open Sans", sans-serif; fill: #fff; }
.tray { margin-left: auto; padding-right: 24px; display: flex; align-items: center; font-size: 15px; line-height: 20px; color: #111; letter-spacing: -.4px; }
.tray p { margin-top: -3px; white-space: nowrap; }
.tray svg:nth-child(2) { margin: 0 23px 0 22px; }
.lang { width: 30px; text-align: center; margin-right: 22px; }
.tray svg:nth-child(5) { margin: 0 9px; }
.clock { width: 99px; text-align: right; letter-spacing: -.05px; }
```
